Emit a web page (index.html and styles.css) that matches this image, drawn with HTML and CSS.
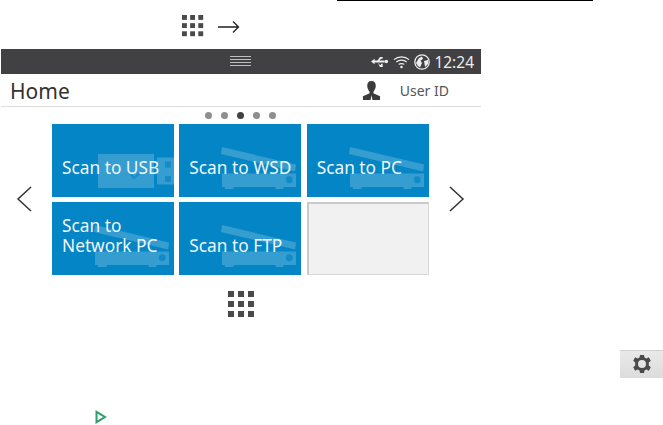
FILE: index.html
```html
<!DOCTYPE html>
<html lang="en">
<head>
<meta charset="utf-8">
<title>Home</title>
<link rel="stylesheet" href="styles.css">
</head>
<body>
<svg width="0" height="0" class="defs">
  <symbol id="grid" viewBox="0 0 27 27">
    <g fill="#4a4a4a">
      <rect x="0" y="0" width="6" height="6"/><rect x="10" y="0" width="6" height="6"/><rect x="20" y="0" width="6" height="6"/>
      <rect x="0" y="10" width="6" height="6"/><rect x="10" y="10" width="6" height="6"/><rect x="20" y="10" width="6" height="6"/>
      <rect x="0" y="20" width="6" height="6"/><rect x="10" y="20" width="6" height="6"/><rect x="20" y="20" width="6" height="6"/>
    </g>
  </symbol>
  <symbol id="scanner" viewBox="0 0 80 45">
    <g fill="#fff" fill-opacity=".2">
      <path d="M1 0 L77 18 L76 25 L0 7 Z"/>
      <path d="M1 27 H77 V41 H64 V43 H56 V41 H13 V43 H4 V41 H1 Z"/>
    </g>
    <circle cx="70" cy="33.500" r="3.500" fill="#0485c5" fill-opacity=".75"/>
  </symbol>
</svg>

<div class="rule"></div>
<div class="hint">
  <svg class="hint-grid"><use href="#grid"/></svg>
  <svg class="hint-arrow" viewBox="0 0 22 14"><path d="M0 7H20M15 1.500L20.500 7L15 12.500" fill="none" stroke="#222" stroke-width="1.300"/></svg>
</div>

<main class="screen">
  <header class="status">
    <div class="handle"><i></i><i></i><i></i><i></i></div>
    <div class="status-right">
      <svg class="ic-usb" viewBox="0 0 20 14"><g fill="#eee"><path d="M0 7 L4 4 V6 H15 V8 H4 V10 Z"/><circle cx="17" cy="7" r="2"/><path d="M7 6.500 L10 2 H13 V4 H11 L9 7Z"/><path d="M7 7.500 L10 11 H11 V9.500 H13 V13 H10 L7.500 8Z"/></g></svg>
      <svg class="ic-wifi" viewBox="0 0 18 14"><g fill="none" stroke="#eee" stroke-width="1.300"><path d="M1 4.500 C5.500 .5 12.500 .5 17 4.500"/><path d="M3.500 7 C6.500 4.500 11.500 4.500 14.500 7"/><path d="M6 9.500 C7.500 8.300 10.500 8.300 12 9.500"/></g><circle cx="9" cy="12.300" r="1.300" fill="#eee"/></svg>
      <svg class="ic-globe" viewBox="0 0 16 16"><circle cx="8" cy="8" r="7.200" fill="#414143" stroke="#eee" stroke-width="1.300"/><path d="M2 9 L5 4 L8 2.500 L9 5 L6.500 6.500 L8 9 L6 13.500 L3.500 11.500 Z M10 7 L14 6 L14 10 L11 13 L10.500 9.500 Z" fill="#eee"/></svg>
      <span class="time">12:24</span>
    </div>
  </header>

  <div class="titlebar">
    <h1 class="title">Home</h1>
    <div class="user">
      <svg class="ic-user" viewBox="0 0 20 20"><path fill="#3c3c3c" d="M10 0 C13 0 14.500 2 14.500 5 C14.500 8 13 10 12 11.500 V13 L19 16 V20 H11 L10 15 L9 20 H1 V16 L8 13 V11.500 C7 10 5.500 8 5.500 5 C5.500 2 7 0 10 0Z"/></svg>
      <span class="user-id">User ID</span>
    </div>
  </div>

  <div class="dots"><i></i><i></i><i class="on"></i><i></i><i></i></div>

  <div class="carousel">
    <svg class="chev" viewBox="0 0 16 26"><path d="M15 1 L2 13 L15 25" fill="none" stroke="#333" stroke-width="1.500"/></svg>
    <div class="tiles">
      <div class="tile">
        <svg class="wm wm-usb" viewBox="0 0 78 34"><path fill="#fff" fill-opacity=".2" d="M0 0H56V34H0Z M59 3.500H76V30.500H59Z"/><rect x="67" y="7.500" width="6" height="6" fill="#0485c5" fill-opacity=".7"/><rect x="67" y="22" width="6" height="6" fill="#0485c5" fill-opacity=".7"/><path d="M30 17 L36 24 L42 19" fill="none" stroke="#0485c5" stroke-opacity=".6" stroke-width="2"/></svg>
        <span class="label">Scan to USB</span>
      </div>
      <div class="tile"><svg class="wm"><use href="#scanner"/></svg><span class="label">Scan to WSD</span></div>
      <div class="tile"><svg class="wm"><use href="#scanner"/></svg><span class="label">Scan to PC</span></div>
      <div class="tile"><svg class="wm"><use href="#scanner"/></svg><span class="label">Scan to<br>Network PC</span></div>
      <div class="tile"><svg class="wm"><use href="#scanner"/></svg><span class="label">Scan to FTP</span></div>
      <div class="tile tile-empty"></div>
    </div>
    <svg class="chev" viewBox="0 0 16 26"><path d="M1 1 L14 13 L1 25" fill="none" stroke="#333" stroke-width="1.500"/></svg>
  </div>

  <div class="apps"><svg class="apps-grid"><use href="#grid"/></svg></div>
</main>

<div class="settings-row">
  <div class="gear-btn">
    <svg class="gear" viewBox="0 0 20 20"><path fill="#4a4a4a" fill-rule="evenodd" d="M8 1H12L12.500 3.600L14.400 4.500L16.800 3.300L18.800 6.700L16.800 8.500V11.500L18.800 13.300L16.800 16.700L14.400 15.500L12.500 16.400L12 19H8L7.500 16.400L5.600 15.500L3.200 16.700L1.200 13.300L3.200 11.500V8.500L1.200 6.700L3.200 3.300L5.600 4.500L7.500 3.600Z M10 6A4 4 0 1 0 10 14A4 4 0 1 0 10 6Z"/></svg>
  </div>
</div>

<div class="play-row">
  <svg class="play" viewBox="0 0 12 14"><path d="M1.500 1.800 L10 7 L1.500 12.200 Z" fill="none" stroke="#2e9e6b" stroke-width="2"/></svg>
</div>
</body>
</html>
```
FILE: styles.css
```css
* { box-sizing: border-box; }
html, body { margin: 0; padding: 0; }
body {
  width: 663px;
  height: 425px;
  overflow: hidden;
  background: #fff;
  font-family: "Noto Sans", "Open Sans", sans-serif;
}
.defs { display: block; height: 0; }

.rule { height: 1px; width: 256px; margin-left: 337px; background: #000; }

.hint { height: 48px; padding: 14px 0 0 182px; display: flex; align-items: flex-start; }
.hint-grid { width: 22px; height: 22px; display: block; }
.hint-arrow { width: 22px; height: 14px; margin: 5px 0 0 14px; display: block; }

.screen { width: 480px; margin-left: 1px; }

.status {
  height: 25px;
  background: #414143;
  display: flex;
  align-items: center;
  position: relative;
  justify-content: flex-end;
  padding-right: 7px;
}
.handle {
  position: absolute;
  left: 229px;
  top: 7px;
  width: 21px;
  display: flex;
  flex-direction: column;
  gap: 2px;
}
.handle i { display: block; height: 1px; background: #bdbdbd; }
.status-right { display: flex; align-items: center; }
.ic-usb { width: 18px; height: 13px; display: block; }
.ic-wifi { width: 17px; height: 14px; margin-left: 4px; display: block; }
.ic-globe { width: 16px; height: 16px; margin-left: 4px; display: block; }
.time { font-size: 15.500px; line-height: 20px; color: #eee; margin-left: 4px; }

.titlebar {
  height: 33px;
  padding: 1px 32px 0 9px;
  border-bottom: 1.500px solid #dedede;
  display: flex;
  align-items: center;
  justify-content: space-between;
}
.title { margin: 0; font-size: 21px; font-weight: 400; color: #333; line-height: 32px; }
.user { display: flex; align-items: center; }
.ic-user { width: 19px; height: 19px; display: block; }
.user-id { font-size: 14px; color: #555; margin-left: 19px; line-height: 20px; }

.dots {
  height: 16.500px;
  padding-left: 204px;
  display: flex;
  align-items: center;
  gap: 9px;
}
.dots i { width: 7px; height: 7px; border-radius: 50%; background: #8e8e8e; display: block; }
.dots i.on { background: #414143; }

.carousel { display: flex; align-items: center; padding-left: 15px; height: 151px; }
.chev { width: 16px; height: 26px; display: block; flex: none; }
.chev:last-child { margin-left: 20px; }

.tiles {
  margin-left: 20px;
  display: grid;
  grid-template-columns: 122px 122px 122px;
  grid-template-rows: 73px 73px;
  column-gap: 5.330px;
  row-gap: 5px;
}
.tile {
  position: relative;
  background: #0485c5;
  overflow: hidden;
  display: flex;
  align-items: flex-end;
  padding: 0 10px 18px;
}
.tile-empty { background: #f1f1f1; border: 1px solid #d8d8d8; border-top: 2px solid #c9c9c9; border-left: 2px solid #c9c9c9; }
.wm { position: absolute; left: 42px; top: 23px; width: 78px; height: 44px; }
.wm-usb { left: 46px; top: 30px; width: 78px; height: 34px; }
.label {
  position: relative;
  font-size: 17.300px;
  line-height: 20.500px;
  color: #eef7fb;
}

.apps { padding: 16px 0 0 227px; height: 75px; }
.apps-grid { width: 27px; height: 27px; display: block; }

.settings-row { height: 28px; display: flex; justify-content: flex-end; }
.gear-btn {
  width: 43px;
  height: 28px;
  background: linear-gradient(#e9e9e9, #dcdcdc);
  border-top: 1px solid #cfcfcf;
  display: flex;
  align-items: center;
  justify-content: center;
}
.gear { width: 20px; height: 20px; display: block; }

.play-row { padding: 32px 0 0 95px; }
.play { width: 12px; height: 14px; display: block; }
```
